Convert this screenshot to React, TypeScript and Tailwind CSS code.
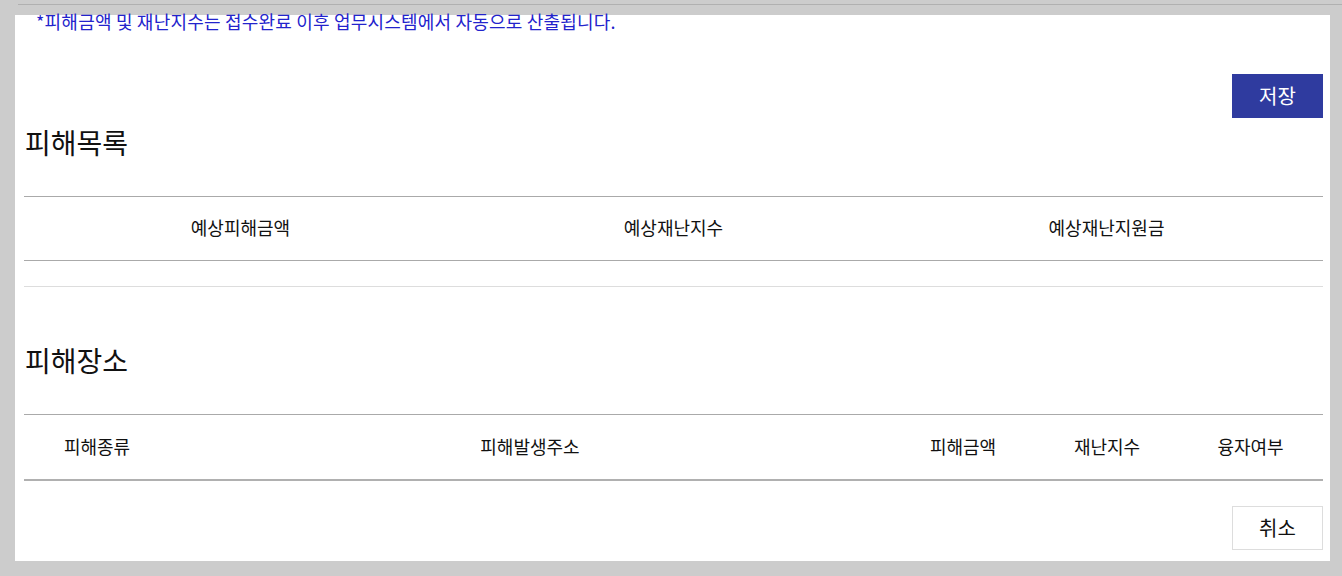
import React from 'react';

const font = { fontFamily: '"Malgun Gothic", "Noto Sans CJK KR", sans-serif' };

const placeCols = [
  { label: '피해종류', w: 'w-[146px]' },
  { label: '피해발생주소', w: 'w-[720px]' },
  { label: '피해금액', w: 'w-[146px]' },
  { label: '재난지수', w: 'w-[142px]' },
  { label: '융자여부', w: 'w-[145px]' },
];

const App = () => {
  return (
    <div className="w-full h-[576px] bg-[#cccccc] overflow-hidden text-[#111]" style={font}>
      <div className="pt-[4px]">
        <div className="ml-[18px] h-px bg-[#b0b0b0]" />
      </div>
      <div className="mt-[10px] ml-[15px] w-[1315px] h-[546px] bg-white pl-[9px] pr-[7px] flex flex-col">
        <p className="-mt-[4px] mb-[1px] pl-[12px] h-[20px] leading-[20px] text-[18px] tracking-[0.2px] text-[#2323cc] whitespace-nowrap">
          *피해금액 및 재난지수는 접수완료 이후 업무시스템에서 자동으로 산출됩니다.
        </p>

        <div className="mt-[42px] flex justify-end">
          <button className="w-[91px] h-[44px] pb-[1px] bg-[#2f3b9f] text-white text-[20px]">저장</button>
        </div>

        <h2 className="mt-[8px] h-[32px] leading-[32px] text-[28px] pl-px">피해목록</h2>

        <div className="mt-[38px] border-t border-[#aaaaaa]">
          <div className="grid grid-cols-3 h-[64px] pb-[2px] items-center text-center text-[18px] border-b border-[#aaaaaa]">
            <div>예상피해금액</div>
            <div>예상재난지수</div>
            <div>예상재난지원금</div>
          </div>
          <div className="h-[26px] border-b border-[#dddddd]" />
        </div>

        <h2 className="mt-[57px] h-[32px] leading-[32px] text-[28px] pl-px">피해장소</h2>

        <div className="mt-[38px] border-t border-[#aaaaaa]">
          <div className="flex h-[66px] pb-[2px] items-center text-[18px] border-b-2 border-[#b0b0b0]">
            {placeCols.map((c) => (
              <div key={c.label} className={`${c.w} text-center`}>
                {c.label}
              </div>
            ))}
          </div>
        </div>

        <div className="mt-[25px] flex justify-end">
          <button className="w-[91px] h-[44px] pb-[1px] bg-white border border-[#dddddd] text-[20px]">취소</button>
        </div>
      </div>
    </div>
  );
};

export default App;
